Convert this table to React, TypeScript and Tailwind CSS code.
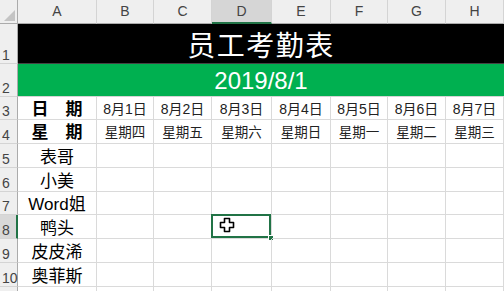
import * as React from "react";

const cols = ["A", "B", "C", "D", "E", "F", "G", "H"];
const dates = ["8月1日", "8月2日", "8月3日", "8月4日", "8月5日", "8月6日", "8月7日"];
const weeks = ["星期四", "星期五", "星期六", "星期日", "星期一", "星期二", "星期三"];
const names = ["表哥", "小美", "Word姐", "鸭头", "皮皮浠", "奥菲斯", ""];

// row heights for rows 5..11
const nameRowH = ["h-[24px]", "h-[24px]", "h-[23px]", "h-[24px]", "h-[24px]", "h-[24px]", "h-[24px]"];

const cell = "border-r border-b border-[#dadada] flex items-center justify-center";

function RowHead({ n, active }: { n?: number; active?: boolean }) {
  return (
    <div
      className={`flex items-end pl-[2px] pb-[1px] text-[14px] leading-none text-[#444] border-b border-[#d4d4d4] ${
        active ? "bg-[#d8d8d8] border-r-2 border-r-[#217346]" : "bg-[#efefef] border-r border-r-[#ababab]"
      }`}
    >
      {n}
    </div>
  );
}

function Cursor() {
  return (
    <svg width="16" height="16" viewBox="0 0 16 16" className="absolute left-[7px] top-[2px]">
      <path
        d="M5.5 1.5h5v4h4v5h-4v4h-5v-4h-4v-5h4z"
        fill="#fff"
        stroke="#000"
        strokeWidth="1.6"
        strokeLinejoin="round"
      />
    </svg>
  );
}

export default function App() {
  return (
    <div className="w-[504px] h-[291px] overflow-hidden bg-white font-['Liberation_Sans','Noto_Sans_CJK_SC',sans-serif]">
      <div className="grid grid-cols-[18px_79px_57px_58px_60px_59px_57px_58px_58px] grid-rows-[24px_40px_33px_23px_24px_24px_24px_23px_24px_24px_24px_24px]">
        {/* corner */}
        <div className="relative bg-[#efefef] border-r border-b border-[#ababab]">
          <div className="absolute right-[2px] bottom-[2px] w-0 h-0 border-l-[11px] border-l-transparent border-b-[11px] border-b-[#c4c4c4]" />
        </div>
        {cols.map((c) => (
          <div
            key={c}
            className={`flex items-center justify-center text-[14px] text-[#444] border-r border-r-[#d4d4d4] ${
              c === "D" ? "bg-[#d6d6d6] border-b-2 border-b-[#217346]" : "bg-[#efefef] border-b border-b-[#ababab]"
            }`}
          >
            {c}
          </div>
        ))}

        {/* row 1 */}
        <RowHead n={1} />
        <div className="col-span-8 bg-black border-b border-[#444] flex items-center justify-center text-white text-[28px] tracking-[1.5px] font-['Noto_Sans_CJK_SC',sans-serif]">
          员工考勤表
        </div>

        {/* row 2 */}
        <RowHead n={2} />
        <div className="col-span-8 bg-[#00b050] border-b border-[#d4d4d4] flex items-center justify-center text-white text-[24px] pt-[1px]">
          2019/8/1
        </div>

        {/* row 3 */}
        <RowHead n={3} />
        <div className={`${cell} pt-[3px] text-[17px] font-bold text-black`}>日　期</div>
        {dates.map((d) => (
          <div key={d} className={`${cell} pt-[3px] text-[14px] text-[#222]`}>
            {d}
          </div>
        ))}

        {/* row 4 */}
        <RowHead n={4} />
        <div className={`${cell} pt-[3px] text-[17px] font-bold text-black`}>星　期</div>
        {weeks.map((w) => (
          <div key={w} className={`${cell} pt-[4px] text-[13.5px] text-[#222]`}>
            {w}
          </div>
        ))}

        {/* name rows */}
        {names.map((name, i) => (
          <React.Fragment key={i}>
            <RowHead n={i < 6 ? i + 5 : undefined} active={i === 3} />
            <div className={`${cell} ${nameRowH[i]} pt-[4px] text-[17px] text-black`}>{name}</div>
            {dates.map((d, j) => (
              <div key={d} className={`${cell} relative`}>
                {i === 3 && j === 2 && (
                  <>
                    <div className="absolute -left-[1px] -top-[1px] right-0 bottom-0 border-2 border-[#217346]" />
                    <div className="absolute -right-[3px] -bottom-[3px] w-[6px] h-[6px] bg-[#217346] border border-white" />
                    <Cursor />
                  </>
                )}
              </div>
            ))}
          </React.Fragment>
        ))}
      </div>
    </div>
  );
}
